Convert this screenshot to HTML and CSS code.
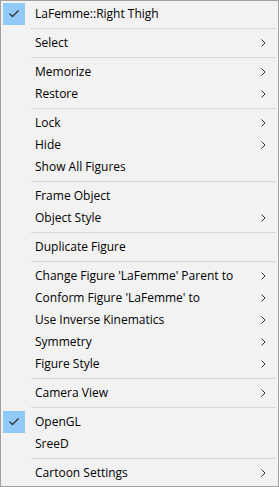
FILE: index.html
```html
<!DOCTYPE html>
<html>
<head>
<meta charset="utf-8">
<link rel="stylesheet" href="styles.css">
</head>
<body>
<div class="menu">
  <div class="item checked"><span class="check"><svg width="22" height="22" viewBox="0 0 22 22"><polyline points="6.5,10.5 9.5,13.5 15.5,7.5" fill="none" stroke="#333" stroke-width="1.3"/></svg></span><span class="label">LaFemme::Right Thigh</span></div>
  <div class="sep"></div>
  <div class="item sub"><span class="check"></span><span class="label">Select</span><svg class="arrow" width="5" height="8" viewBox="0 0 5 8"><polyline points="0.5,0.5 4,4 0.5,7.5" fill="none" stroke="#333" stroke-width="1"/></svg></div>
  <div class="sep"></div>
  <div class="item sub"><span class="check"></span><span class="label">Memorize</span><svg class="arrow" width="5" height="8" viewBox="0 0 5 8"><polyline points="0.5,0.5 4,4 0.5,7.5" fill="none" stroke="#333" stroke-width="1"/></svg></div>
  <div class="item sub"><span class="check"></span><span class="label">Restore</span><svg class="arrow" width="5" height="8" viewBox="0 0 5 8"><polyline points="0.5,0.5 4,4 0.5,7.5" fill="none" stroke="#333" stroke-width="1"/></svg></div>
  <div class="sep"></div>
  <div class="item sub"><span class="check"></span><span class="label">Lock</span><svg class="arrow" width="5" height="8" viewBox="0 0 5 8"><polyline points="0.5,0.5 4,4 0.5,7.5" fill="none" stroke="#333" stroke-width="1"/></svg></div>
  <div class="item sub"><span class="check"></span><span class="label">Hide</span><svg class="arrow" width="5" height="8" viewBox="0 0 5 8"><polyline points="0.5,0.5 4,4 0.5,7.5" fill="none" stroke="#333" stroke-width="1"/></svg></div>
  <div class="item"><span class="check"></span><span class="label">Show All Figures</span></div>
  <div class="sep"></div>
  <div class="item"><span class="check"></span><span class="label">Frame Object</span></div>
  <div class="item sub"><span class="check"></span><span class="label">Object Style</span><svg class="arrow" width="5" height="8" viewBox="0 0 5 8"><polyline points="0.5,0.5 4,4 0.5,7.5" fill="none" stroke="#333" stroke-width="1"/></svg></div>
  <div class="sep"></div>
  <div class="item"><span class="check"></span><span class="label">Duplicate Figure</span></div>
  <div class="sep"></div>
  <div class="item sub"><span class="check"></span><span class="label">Change Figure 'LaFemme' Parent to</span><svg class="arrow" width="5" height="8" viewBox="0 0 5 8"><polyline points="0.5,0.5 4,4 0.5,7.5" fill="none" stroke="#333" stroke-width="1"/></svg></div>
  <div class="item sub"><span class="check"></span><span class="label">Conform Figure 'LaFemme' to</span><svg class="arrow" width="5" height="8" viewBox="0 0 5 8"><polyline points="0.5,0.5 4,4 0.5,7.5" fill="none" stroke="#333" stroke-width="1"/></svg></div>
  <div class="item sub"><span class="check"></span><span class="label">Use Inverse Kinematics</span><svg class="arrow" width="5" height="8" viewBox="0 0 5 8"><polyline points="0.5,0.5 4,4 0.5,7.5" fill="none" stroke="#333" stroke-width="1"/></svg></div>
  <div class="item sub"><span class="check"></span><span class="label">Symmetry</span><svg class="arrow" width="5" height="8" viewBox="0 0 5 8"><polyline points="0.5,0.5 4,4 0.5,7.5" fill="none" stroke="#333" stroke-width="1"/></svg></div>
  <div class="item sub"><span class="check"></span><span class="label">Figure Style</span><svg class="arrow" width="5" height="8" viewBox="0 0 5 8"><polyline points="0.5,0.5 4,4 0.5,7.5" fill="none" stroke="#333" stroke-width="1"/></svg></div>
  <div class="sep"></div>
  <div class="item sub"><span class="check"></span><span class="label">Camera View</span><svg class="arrow" width="5" height="8" viewBox="0 0 5 8"><polyline points="0.5,0.5 4,4 0.5,7.5" fill="none" stroke="#333" stroke-width="1"/></svg></div>
  <div class="sep"></div>
  <div class="item checked"><span class="check"><svg width="22" height="22" viewBox="0 0 22 22"><polyline points="6.5,10.5 9.5,13.5 15.5,7.5" fill="none" stroke="#333" stroke-width="1.3"/></svg></span><span class="label">OpenGL</span></div>
  <div class="item"><span class="check"></span><span class="label">SreeD</span></div>
  <div class="sep"></div>
  <div class="item sub"><span class="check"></span><span class="label">Cartoon Settings</span><svg class="arrow" width="5" height="8" viewBox="0 0 5 8"><polyline points="0.5,0.5 4,4 0.5,7.5" fill="none" stroke="#333" stroke-width="1"/></svg></div>
</div>
</body>
</html>
```
FILE: styles.css
```css
html, body {
  margin: 0;
  padding: 0;
  background: #f2f2f2;
}
.menu {
  box-sizing: border-box;
  width: 279px;
  height: 487px;
  border: 1px solid #a0a0a0;
  background: #f2f2f2;
  padding: 2px;
  font-family: "Open Sans", "Noto Sans", sans-serif;
  font-size: 12px;
  color: #000;
}
.item {
  display: flex;
  align-items: center;
  height: 22px;
}
.check {
  width: 22px;
  height: 22px;
  flex: none;
  display: block;
}
.checked .check {
  background: #91c9f7;
}
.check svg {
  display: block;
}
.label {
  flex: 1;
  margin-left: 10px;
  white-space: nowrap;
  line-height: 22px;
}
.arrow {
  flex: none;
  margin-right: 10px;
}
.sep {
  height: 1px;
  background: #d7d7d7;
  margin: 3px 0 3px 28px;
}
```
